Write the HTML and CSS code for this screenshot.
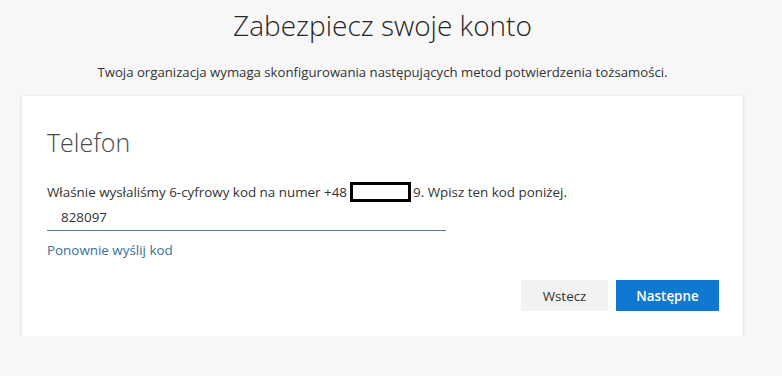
FILE: index.html
```html
<!DOCTYPE html>
<html>
<head>
	<title>Zabezpiecz swoje konto</title>
	<link rel="stylesheet" href="styles.css">
</head>
<body>
	<div class="page">
		<h1 class="title">Zabezpiecz swoje konto</h1>
		<p class="lead">Twoja organizacja wymaga skonfigurowania następujących metod potwierdzenia tożsamości.</p>

		<div class="card">
			<h2 class="card-title">Telefon</h2>
			<p class="info">Właśnie wysłaliśmy 6-cyfrowy kod na numer +48<span class="redact"></span>9. Wpisz ten kod poniżej.</p>
			<input class="code" type="text" value="828097">
			<a href="#" class="resend">Ponownie wyślij kod</a>
			<div class="actions">
				<button class="btn">Wstecz</button>
				<button class="btn primary">Następne</button>
			</div>
		</div>
	</div>
</body>
</html>
```

FILE: styles.css
```css
body {
	margin: 0;
	background: #f7f7f7;
	font-family: "Open Sans", "Noto Sans", sans-serif;
	color: #262626;
}

.page {
	width: 721px;
	margin-left: 22px;
}

.title {
	margin: 0;
	padding-top: 5px;
	font-size: 28px;
	font-weight: 300;
	line-height: 40px;
	text-align: center;
	color: #262626;
}

.lead {
	margin: 17px 0 14px;
	font-size: 13.2px;
	line-height: 20px;
	text-align: center;
	color: #333;
}

.card {
	background: #fff;
	box-shadow: 0 1px 3px rgba(0, 0, 0, 0.18);
	padding: 26px 24px 25px 25px;
}

.card-title {
	margin: 0;
	font-size: 25px;
	font-weight: 300;
	line-height: 40px;
	color: #4a4a4a;
}

.info {
	margin: 20px 0 0;
	font-size: 13.4px;
	line-height: 20px;
	color: #333;
}

.redact {
	display: inline-block;
	width: 55px;
	height: 14px;
	margin: 0 2px 0 3px;
	border: 3px solid #000;
	vertical-align: -5px;
}

.code {
	display: block;
	box-sizing: border-box;
	width: 399px;
	height: 28px;
	margin-top: 1px;
	padding: 0 14px;
	border: none;
	border-bottom: 1px solid #4f8294;
	font-family: "Open Sans", "Noto Sans", sans-serif;
	font-size: 13.4px;
	color: #333;
	outline: none;
}

.resend {
	display: inline-block;
	margin-top: 9px;
	font-size: 13.4px;
	line-height: 20px;
	color: #33729a;
	text-decoration: none;
}

.actions {
	display: flex;
	justify-content: flex-end;
	gap: 8px;
	margin-top: 20px;
}

.btn {
	height: 31px;
	min-width: 87px;
	padding: 0 12px;
	border: none;
	background: #f2f2f2;
	font-family: "Open Sans", "Noto Sans", sans-serif;
	font-size: 13.4px;
	color: #333;
}

.btn.primary {
	min-width: 103px;
	background: #0f78d0;
	color: #fff;
	font-weight: 600;
}
```
